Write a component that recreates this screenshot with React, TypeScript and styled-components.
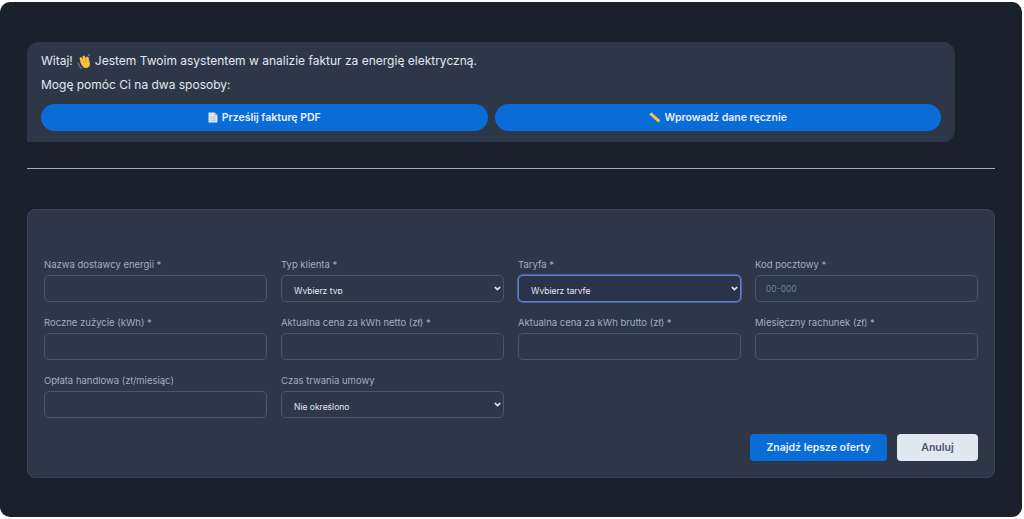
import React from 'react'
import { ChevronDown } from 'lucide-react'
import styled, { createGlobalStyle } from 'styled-components'

const GlobalStyle = createGlobalStyle`
  html, body {
    margin: 0;
    padding: 0;
    background: #ffffff;
  }
  * {
    box-sizing: border-box;
  }
`

const Shell = styled.div`
  width: 1022px;
  height: 515px;
  margin-top: 2px;
  padding: 40px 27px 0;
  background: #1a202c;
  border-radius: 10px;
  font-family: Inter, 'Liberation Sans', sans-serif;
`

const Bubble = styled.div`
  width: 928px;
  height: 100px;
  padding: 10px 14px 0;
  background: #2d3748;
  border-radius: 12px 12px 12px 0;
  color: #e2e8f0;
  font-size: 12px;
  line-height: 18px;
`

const BubbleLine = styled.p`
  display: flex;
  align-items: center;
  gap: 4px;
  margin: 0 0 6px;
`

const ChoiceRow = styled.div`
  display: grid;
  grid-template-columns: 1fr 1fr;
  gap: 7px;
  margin-top: 10px;
`

const ChoiceButton = styled.button`
  display: flex;
  align-items: center;
  justify-content: center;
  gap: 4px;
  height: 27px;
  border: 0;
  border-radius: 14px;
  background: #0a6cd6;
  color: #e8f1fb;
  font: 600 10.5px Inter, 'Liberation Sans', sans-serif;
`

const Divider = styled.hr`
  margin: 26px 0 40px;
  border: 0;
  height: 1px;
  background: #a0aec0;
`

const FormCard = styled.form`
  height: 269px;
  padding: 48px 16px 0;
  background: #2d3748;
  border: 1px solid #3a4557;
  border-radius: 8px;
`

const FieldGrid = styled.div`
  display: grid;
  grid-template-columns: repeat(4, 223px);
  column-gap: 14px;
  row-gap: 13px;
`

const Field = styled.label`
  display: flex;
  flex-direction: column;
  gap: 4px;
  height: 45px;
  color: #a0aec0;
  font-size: 9.5px;
  line-height: 13px;
`

const TextInput = styled.input`
  width: 100%;
  height: 27px;
  padding: 0 10px;
  background: #2d3748;
  border: 1px solid #4a5568;
  border-radius: 5px;
  color: #e2e8f0;
  font: 8.5px Inter, 'Liberation Sans', sans-serif;
  outline: none;

  &::placeholder {
    color: #718096;
  }
`

const SelectWrap = styled.div`
  position: relative;
  height: 27px;
`

const SelectInput = styled.select<{ $focused?: boolean }>`
  appearance: none;
  width: 100%;
  height: 27px;
  padding: 10px 12px 7px;
  background: ${({ $focused }) => ($focused ? '#29334a' : '#2d3748')};
  border: 1px solid ${({ $focused }) => ($focused ? '#6480cc' : '#4a5568')};
  border-radius: 5px;
  box-shadow: ${({ $focused }) => ($focused ? '0 0 0 1px #4a63a8' : 'none')};
  color: #e2e8f0;
  font: 8.5px Inter, 'Liberation Sans', sans-serif;
  outline: none;
`

const SelectChevron = styled(ChevronDown)`
  position: absolute;
  top: 9px;
  right: 2px;
  width: 9px;
  height: 9px;
  color: #e2e8f0;
  stroke-width: 4;
  pointer-events: none;
`

const Actions = styled.div`
  display: flex;
  justify-content: flex-end;
  gap: 10px;
  margin-top: 15px;
`

const SubmitButton = styled.button`
  width: 137px;
  height: 27px;
  border: 0;
  border-radius: 4px;
  background: #0a6cd6;
  color: #e8f1fb;
  font: 600 10.5px Inter, 'Liberation Sans', sans-serif;
`

const CancelButton = styled.button`
  width: 81px;
  height: 27px;
  border: 0;
  border-radius: 4px;
  background: #e2e8f0;
  color: #4a5568;
  font: 600 10.5px Inter, 'Liberation Sans', sans-serif;
`

const WaveIcon = () => (
  <svg width="14" height="15" viewBox="0 0 14 15" aria-hidden="true">
    <path d="M2.5 4 L4 3 L6 5 L5.5 2 L7.5 1.5 L9 4.5 L9.5 2.5 L11.5 3 L13 10 C13 13 10.5 14.5 8 14 C6 13.5 4.5 11 3.5 8.5 Z" fill="#f5c33b" />
    <path d="M5.5 6 L7.5 9 M8 5 L9.5 8.5" stroke="#c98f1d" strokeWidth="0.6" />
    <path d="M1 9 L2.5 12 M2.5 12.5 L4.5 14.5 M11 0.5 L13 2" stroke="#5b84b1" strokeWidth="1.1" />
  </svg>
)

const DocIcon = () => (
  <svg width="10" height="11" viewBox="0 0 10 11" aria-hidden="true">
    <path d="M0.5 0.5 H6.5 L9.5 3.5 V10.5 H0.5 Z" fill="#dfe6ee" />
    <path d="M6.5 0.5 V3.5 H9.5 Z" fill="#aab7c4" />
    <path d="M2 5 H8 M2 6.8 H8 M2 8.6 H8" stroke="#b4c0cb" strokeWidth="0.7" />
  </svg>
)

const PencilIcon = () => (
  <svg width="12" height="11" viewBox="0 0 12 11" aria-hidden="true">
    <path d="M0.5 2.5 L2.5 0.5 L11 8 L11.5 10.5 L8.5 10 Z" fill="#eec64a" />
    <path d="M0.5 2.5 L2.5 0.5 L3.6 1.5 L1.6 3.5 Z" fill="#e3b7a8" />
    <path d="M9.8 9.9 L11 8.6 L11.5 10.5 Z" fill="#3d4656" />
  </svg>
)

const Select = ({ label, focused }: { label: string; focused?: boolean }) => (
  <SelectWrap>
    <SelectInput $focused={focused}>
      <option>{label}</option>
    </SelectInput>
    <SelectChevron />
  </SelectWrap>
)

export default function App() {
  return (
    <>
      <GlobalStyle />
      <Shell>
        <Bubble>
          <BubbleLine>
            Witaj! <WaveIcon /> Jestem Twoim asystentem w analizie faktur za energię elektryczną.
          </BubbleLine>
          <BubbleLine>Mogę pomóc Ci na dwa sposoby:</BubbleLine>
          <ChoiceRow>
            <ChoiceButton type="button">
              <DocIcon /> Prześlij fakturę PDF
            </ChoiceButton>
            <ChoiceButton type="button">
              <PencilIcon /> Wprowadź dane ręcznie
            </ChoiceButton>
          </ChoiceRow>
        </Bubble>
        <Divider />
        <FormCard>
          <FieldGrid>
            <Field>
              Nazwa dostawcy energii *
              <TextInput />
            </Field>
            <Field>
              Typ klienta *
              <Select label="Wybierz typ" />
            </Field>
            <Field>
              Taryfa *
              <Select label="Wybierz taryfę" focused />
            </Field>
            <Field>
              Kod pocztowy *
              <TextInput placeholder="00-000" />
            </Field>
            <Field>
              Roczne zużycie (kWh) *
              <TextInput />
            </Field>
            <Field>
              Aktualna cena za kWh netto (zł) *
              <TextInput />
            </Field>
            <Field>
              Aktualna cena za kWh brutto (zł) *
              <TextInput />
            </Field>
            <Field>
              Miesięczny rachunek (zł) *
              <TextInput />
            </Field>
            <Field>
              Opłata handlowa (zł/miesiąc)
              <TextInput />
            </Field>
            <Field>
              Czas trwania umowy
              <Select label="Nie określono" />
            </Field>
          </FieldGrid>
          <Actions>
            <SubmitButton type="button">Znajdź lepsze oferty</SubmitButton>
            <CancelButton type="button">Anuluj</CancelButton>
          </Actions>
        </FormCard>
      </Shell>
    </>
  )
}
